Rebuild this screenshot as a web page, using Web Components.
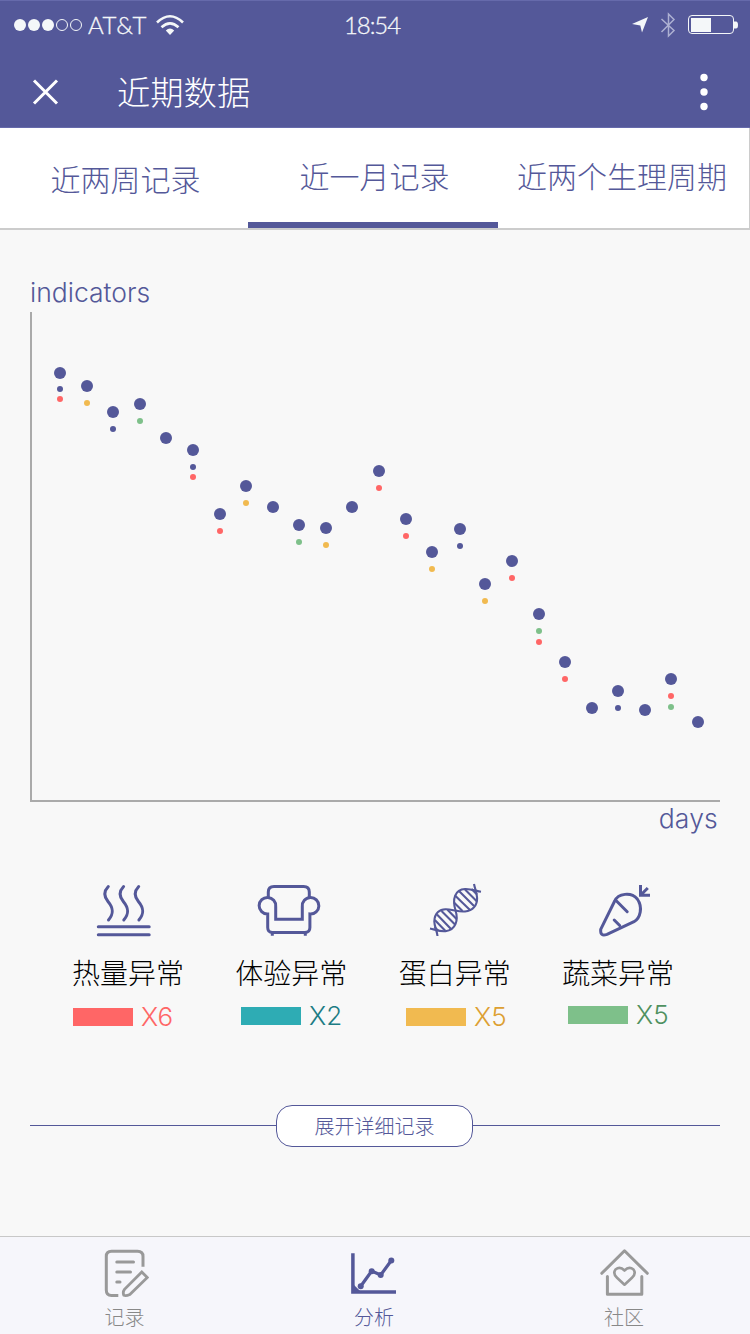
<!DOCTYPE html>
<html lang="zh-CN">
<head>
<meta charset="utf-8">
<title>近期数据</title>
<style>
    body {
        margin: 0;
        width: 750px;
        height: 1334px;
        display: flex;
        flex-direction: column;
        overflow: hidden;
        background: #f8f8f8;
        color: #545899;
        font-family: Inter, "Noto Sans CJK SC", sans-serif;
        font-weight: 300;
        --main: #545899;
    }
    main {
        flex: 1;
        display: flex;
        flex-direction: column;
        padding: 0 30px;
    }
    .legend {
        display: grid;
        grid-template-columns: repeat(4, 111px);
        justify-content: space-between;
        margin: 47px 47px 0 42px;
    }
</style>
</head>
<body>
<status-bar carrier="AT&amp;T" time="18:54"></status-bar>
<title-bar>近期数据</title-bar>
<tab-bar>
    <tab-item style="--drop: 3px; --nudge: 3px">近两周记录</tab-item>
    <tab-item active style="--nudge: 3px">近一月记录</tab-item>
    <tab-item style="--nudge: -3px">近两个生理周期</tab-item>
</tab-bar>
<main>
    <dot-chart y-label="indicators" x-label="days"></dot-chart>
    <div class="legend">
        <legend-item icon="heat" count="X6" style="--swatch: #ff6666; --text: #ff6666; --top: 8px; --left: 1px; --icon-left: 22px">热量异常</legend-item>
        <legend-item icon="sofa" count="X2" style="--swatch: #2eacb4; --text: #1c7c84; --top: 7px; --left: 5.7px; --icon-left: 21.2px">体验异常</legend-item>
        <legend-item icon="dna" count="X5" style="--swatch: #f1ba50; --text: #dda032; --top: 8px; --left: 7.3px; --icon-left: 29.3px">蛋白异常</legend-item>
        <legend-item icon="carrot" count="X5" style="--swatch: #7ec08a; --text: #4f9160; --top: 6px; --left: 6px; --icon-left: 35px">蔬菜异常</legend-item>
    </div>
    <expand-button>展开详细记录</expand-button>
</main>
<nav-bar>
    <nav-item icon="note">记录</nav-item>
    <nav-item icon="chart" active>分析</nav-item>
    <nav-item icon="home">社区</nav-item>
</nav-bar>

<script>
const ICONS = {
    heat: `<svg width="60" height="56" viewBox="0 0 60 56" fill="none" stroke="currentColor" stroke-width="3" stroke-linecap="round">
        <path d="M14.3 4.5C10 9 9.5 14 14 19.5C19 25.5 20.5 31 14.5 38M29.6 4.5C25.3 9 24.8 14 29.3 19.5C34.3 25.5 35.8 31 29.8 38M44.7 4.5C40.4 9 39.9 14 44.4 19.5C49.4 25.5 50.9 31 44.9 38"/>
        <path d="M4.3 44.8H55.2M4.3 52.8H55.2"/></svg>`,
    sofa: `<svg width="64" height="56" viewBox="0 0 64 56" fill="none" stroke="currentColor" stroke-width="3">
        <path d="M11.3 16V10Q11.3 4.4 17 4.4H46.6Q52.3 4.4 52.3 10V16"/>
        <path d="M18.7 37.3V24.5A8.3 8.3 0 1 0 10.7 32V45.5Q10.7 50.5 15.5 50.5H47.8Q52.9 50.5 52.9 45.5V32A8.3 8.3 0 1 0 45.3 24.5V37.3Z"/>
        <path d="M15.3 51V53.8M48.3 51V53.8"/></svg>`,
    dna: `<svg width="56" height="56" viewBox="0 0 56 56" fill="none" stroke="currentColor" stroke-width="2.1">
        <path d="M2 46.5C7 47.5 12 49.8 17.5 49.2C28 48 30.5 38 27.5 28.3C24 17 27 7.5 37 7C43 6.7 48 9 53 9.8"/>
        <path d="M9.5 54C9 49 6.3 44 6.3 39.5C6.5 31 12 27 18 27.3C21 27.5 24 28 27.5 28.5C31 29.5 34 29.7 37 29.5C45 29 49.3 23 49.1 16C49 11 47 7 46 2"/>
        <path d="M6.5 45L10.5 49M6.8 38L17.5 49M9 32.5L23 47M13.5 29L27 42.5M19.5 27.8L28.5 37M26 20.5L34.5 29M27 13.5L42 28M31 9L46 24M37 7.5L49 19.5M43.5 7L49 12.5"/></svg>`,
    carrot: `<svg width="56" height="56" viewBox="0 0 56 56" fill="none" stroke="currentColor" stroke-width="3" stroke-linecap="round" stroke-linejoin="round">
        <path d="M3.7 47.3L17.7 19C21 11.5 34 9.5 40.3 17C46 25 43.5 36 37 39.7L10 52.3Q3 55 3.7 47.3Z"/>
        <path d="M19 18.5L30.2 29.7M17.2 38L22.7 43.5"/>
        <path d="M43.5 3V13.3H53M43.5 13.3L50.8 6" stroke-linecap="butt" stroke-linejoin="miter"/></svg>`,
    note: `<svg width="48" height="50" viewBox="0 0 48 50" fill="none" stroke="currentColor" stroke-width="3">
        <path d="M17.3 47.5H10.5Q5.3 47.5 5.3 42V8.5Q5.3 3.3 10.5 3.3H36.5Q42 3.3 42 8.5V18.8"/>
        <path d="M15.8 14H32.5M15.8 24H29.5M15.8 34H19" stroke-linecap="round"/>
        <path d="M40.8 24L46.3 29.5L28.8 46.5Q25 48.3 22.8 47.3Q21.5 44 23.5 41.3Z" stroke-width="2.8"/></svg>`,
    chart: `<svg width="48" height="50" viewBox="0 0 48 50" fill="none" stroke="currentColor" stroke-width="3">
        <path d="M2.9 5.3V44H46" stroke-width="3.5"/>
        <path d="M4 39V43H8Z"/>
        <path d="M10.7 38.3L21.7 23L30.7 27L41.3 12.5" stroke-width="3.2"/>
        <g fill="currentColor" stroke="none"><circle cx="10.7" cy="38.3" r="3"/><circle cx="21.7" cy="23.2" r="3"/><circle cx="30.7" cy="27" r="3"/><circle cx="41.3" cy="12.5" r="3"/></g></svg>`,
    home: `<svg width="52" height="50" viewBox="0 0 52 50" fill="none" stroke="currentColor" stroke-width="3" stroke-linecap="round" stroke-linejoin="round">
        <path d="M3.8 25.3L26.5 2.8L49.3 25.3M9.4 28.5V46.3H43.8V28.5"/>
        <path d="M26.5 36.7L19 29.7Q14.5 25.5 17.5 21.5Q22 17.8 26.5 22.5Q31 17.8 35.5 21.5Q38.5 25.5 34 29.7Z" stroke-width="2.6"/></svg>`
};

class StatusBar extends HTMLElement {
    constructor() {
        super();
        this.attachShadow({mode: "open"});
    }

    connectedCallback() {
        this.shadowRoot.innerHTML = `
            <style>
                :host {
                    display: grid;
                    grid-template-columns: 1fr auto 1fr;
                    align-items: center;
                    height: 50px;
                    box-sizing: border-box;
                    padding: 0 12px 2px 14px;
                    background: var(--main);
                    border-top: 1px solid #666aab;
                    color: #f4f7f9;
                    font: 300 24px/46px Lato, sans-serif;
                }
                .left, .right { display: flex; align-items: center; }
                .right { justify-content: flex-end; }
                .carrier { width: 60px; margin: 0 8px 0 6px; letter-spacing: .5px; -webkit-text-stroke: .3px; }
                .time { margin-right: 8px; letter-spacing: -1.1px; -webkit-text-stroke: .3px; }
                svg { display: block; }
            </style>
            <div class="left">
                <svg width="68" height="14" fill="none" stroke="currentColor">
                    <g fill="currentColor" stroke="none"><circle cx="6" cy="7" r="6"/><circle cx="20" cy="7" r="6"/><circle cx="34" cy="7" r="6"/></g>
                    <circle cx="48" cy="7" r="5.5"/><circle cx="62" cy="7" r="5.5"/>
                </svg>
                <span class="carrier">${this.getAttribute("carrier").replace("&", "&amp;")}</span>
                <svg width="28" height="22" fill="none" stroke="currentColor" stroke-width="2.6">
                    <path d="M1 8.5Q14 -4 27 8.5M5.5 13.3Q14 5.5 22.5 13.3"/>
                    <path d="M9.8 16.5Q14 12.5 18.2 16.5L14 21Z" fill="currentColor" stroke="none"/>
                </svg>
            </div>
            <span class="time">${this.getAttribute("time")}</span>
            <div class="right">
                <svg width="106" height="26">
                    <path d="M16 5L10 20.5L8.3 13.5L0 12Z" fill="currentColor"/>
                    <path d="M29.5 7L42 18.5L36.5 24V2L42 7.5L29.5 20" fill="none" stroke="#adb0d2" stroke-width="1.5"/>
                    <rect x="56.5" y="3.5" width="45" height="18" rx="3.5" fill="none" stroke="currentColor"/>
                    <path d="M59 6H79V20H59ZM102 9.5H104Q106 9.5 106 13Q106 16.5 104 16.5H102Z" fill="currentColor"/>
                </svg>
            </div>`;
    }
}

class TitleBar extends HTMLElement {
    constructor() {
        super();
        this.attachShadow({mode: "open"}).innerHTML = `
            <style>
                :host {
                    display: flex;
                    align-items: center;
                    height: 78px;
                    box-sizing: border-box;
                    padding: 6px 40px 0 32px;
                    background: var(--main);
                    border-bottom: 1px solid #666aab;
                    color: #fff;
                    font-size: 33.3px;
                    line-height: 68px;
                }
                h1 { flex: 1; margin: 0 0 0 58px; padding-top: 3px; font: inherit; }
            </style>
            <svg width="27" height="26" stroke="#fff" stroke-width="3"><path d="M2 1.5L25 24.5M25 1.5L2 24.5"/></svg>
            <h1><slot></slot></h1>
            <svg width="12" height="40" fill="#fff"><circle cx="6" cy="5.5" r="3.7"/><circle cx="6" cy="20" r="3.7"/><circle cx="6" cy="34.5" r="3.7"/></svg>`;
    }
}

class TabBar extends HTMLElement {
    constructor() {
        super();
        this.attachShadow({mode: "open"}).innerHTML = `
            <style>
                :host {
                    display: grid;
                    grid-template-columns: 248px 250px 1fr;
                    grid-template-rows: 100px;
                    height: 102px;
                    box-sizing: border-box;
                    background: #fff;
                    border-bottom: 2px solid #ccc;
                    border-right: 1px solid #ccc;
                }
            </style>
            <slot></slot>`;
    }
}

class TabItem extends HTMLElement {
    constructor() {
        super();
        this.attachShadow({mode: "open"}).innerHTML = `
            <style>
                :host {
                    display: block;
                    height: 100px;
                    box-sizing: border-box;
                    padding-top: var(--drop, 0);
                    border-bottom: 6px solid transparent;
                    text-align: center;
                    text-indent: var(--nudge, 0);
                    white-space: nowrap;
                    font-size: 30px;
                    line-height: 99px;
                }
                :host([active]) { border-color: var(--main); }
            </style>
            <slot></slot>`;
    }
}

// x, y of the day's value, then the colours of the marks under it
const DAYS = [
    [60, 373, "br"], [87, 386, "y"], [113, 412, "b"], [140, 404, "g"], [166, 438, ""],
    [193, 450, "br"], [220, 514, "r"], [246, 486, "y"], [273, 507, ""], [299, 525, "g"],
    [326, 528, "y"], [352, 507, ""], [379, 471, "r"], [406, 519, "r"], [432, 552, "y"],
    [460, 529, "b"], [485, 584, "y"], [512, 561, "r"], [539, 614, "gr"], [565, 662, "r"],
    [592, 708, ""], [618, 691, "b"], [645, 710, ""], [671, 679, "rg"], [698, 722, ""]
];
const MARKS = {b: "#545899", r: "#ff6666", y: "#f1ba50", g: "#7ec08a"};

class DotChart extends HTMLElement {
    constructor() {
        super();
        this.attachShadow({mode: "open"});
    }

    connectedCallback() {
        const dots = DAYS.map(([x, y, marks], day) => {
            const small = [...marks].map((mark, i) => {
                const offset = day === 0 ? 16 + i * 10 : 17 + i * (day === 5 ? 10 : 11);
                return `<circle cx="${x}" cy="${y + offset}" r="3" fill="${MARKS[mark]}"/>`;
            }).join("");
            return `<circle cx="${x}" cy="${y}" r="6" fill="#545899"/>${small}`;
        }).join("");
        this.shadowRoot.innerHTML = `
            <style>
                :host { display: block; font-size: 26.5px; line-height: 34px; }
                .y { padding: 45px 0 3px; }
                .x { margin-top: -1px; text-align: right; padding-right: 2px; letter-spacing: .2px; }
                svg { display: block; box-sizing: border-box; border: solid #aaa; border-width: 0 0 2px 2px; }
            </style>
            <div class="y">${this.getAttribute("y-label")}</div>
            <svg width="690" height="490" viewBox="32 312 688 488">${dots}</svg>
            <div class="x">${this.getAttribute("x-label")}</div>`;
    }
}

class LegendItem extends HTMLElement {
    constructor() {
        super();
        this.attachShadow({mode: "open"});
    }

    connectedCallback() {
        this.shadowRoot.innerHTML = `
            <style>
                :host { display: block; white-space: nowrap; }
                .icon { display: flex; height: 56px; padding-left: var(--icon-left); color: var(--main); }
                .name { margin-top: 16px; color: #000; font-size: 28px; line-height: 40px; }
                .count {
                    display: flex;
                    align-items: center;
                    gap: 8px;
                    padding: var(--top) 0 0 var(--left);
                    color: var(--text);
                    font-size: 26px;
                    line-height: 30px;
                }
                i { width: 60px; height: 18px; background: var(--swatch); }
            </style>
            <div class="icon">${ICONS[this.getAttribute("icon")]}</div>
            <div class="name"><slot></slot></div>
            <div class="count"><i></i>${this.getAttribute("count")}</div>`;
    }
}

class ExpandButton extends HTMLElement {
    constructor() {
        super();
        this.attachShadow({mode: "open"}).innerHTML = `
            <style>
                :host { display: flex; align-items: center; margin-top: 73px; }
                :host::before, :host::after { content: ""; height: 1px; margin-bottom: 1px; background: var(--main); }
                :host::before { width: 246px; }
                :host::after { flex: 1; }
                button {
                    width: 197px;
                    height: 42px;
                    padding: 0;
                    border: 1px solid var(--main);
                    border-radius: 16px;
                    background: #fff;
                    color: inherit;
                    font: inherit;
                    font-size: 20px;
                    line-height: 42px;
                }
            </style>
            <button><slot></slot></button>`;
    }
}

class NavBar extends HTMLElement {
    constructor() {
        super();
        this.attachShadow({mode: "open"}).innerHTML = `
            <style>
                :host {
                    display: grid;
                    grid-template-columns: 249px 250px 250px;
                    height: 98px;
                    box-sizing: border-box;
                    background: #f6f6fb;
                    border-top: 1px solid #c8c8c8;
                }
            </style>
            <slot></slot>`;
    }
}

class NavItem extends HTMLElement {
    constructor() {
        super();
        this.attachShadow({mode: "open"});
    }

    connectedCallback() {
        this.shadowRoot.innerHTML = `
            <style>
                :host {
                    display: flex;
                    flex-direction: column;
                    align-items: center;
                    padding-top: 11px;
                    color: #999;
                    font-size: 20px;
                    line-height: 40px;
                }
                :host([active]) { color: var(--main); }
                span { color: #888; }
                :host([active]) span { color: inherit; }
            </style>
            ${ICONS[this.getAttribute("icon")]}
            <span><slot></slot></span>`;
    }
}

customElements.define("status-bar", StatusBar);
customElements.define("title-bar", TitleBar);
customElements.define("tab-bar", TabBar);
customElements.define("tab-item", TabItem);
customElements.define("dot-chart", DotChart);
customElements.define("legend-item", LegendItem);
customElements.define("expand-button", ExpandButton);
customElements.define("nav-bar", NavBar);
customElements.define("nav-item", NavItem);
</script>
</body>
</html>
